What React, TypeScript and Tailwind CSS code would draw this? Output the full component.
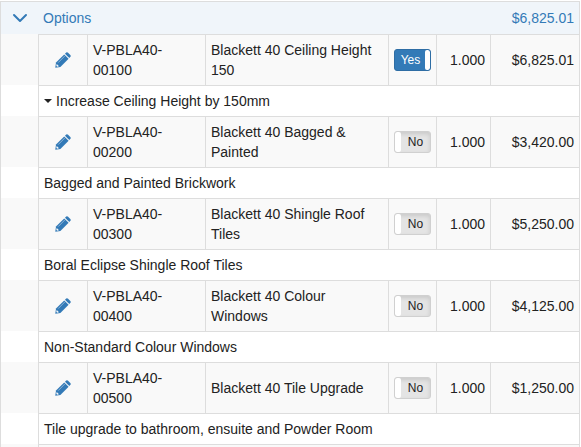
import { useState } from 'react';
import { ChevronDown } from 'lucide-react';

interface OptionItem {
    code: string;
    name: string;
    note: string;
    expandable?: boolean;
    selected: boolean;
    quantity: string;
    price: string;
}

const initialOptions: OptionItem[] = [
    { code: 'V-PBLA40-00100', name: 'Blackett 40 Ceiling Height 150', note: 'Increase Ceiling Height by 150mm', expandable: true, selected: true, quantity: '1.000', price: '$6,825.01' },
    { code: 'V-PBLA40-00200', name: 'Blackett 40 Bagged & Painted', note: 'Bagged and Painted Brickwork', selected: false, quantity: '1.000', price: '$3,420.00' },
    { code: 'V-PBLA40-00300', name: 'Blackett 40 Shingle Roof Tiles', note: 'Boral Eclipse Shingle Roof Tiles', selected: false, quantity: '1.000', price: '$5,250.00' },
    { code: 'V-PBLA40-00400', name: 'Blackett 40 Colour Windows', note: 'Non-Standard Colour Windows', selected: false, quantity: '1.000', price: '$4,125.00' },
    { code: 'V-PBLA40-00500', name: 'Blackett 40 Tile Upgrade', note: 'Tile upgrade to bathroom, ensuite and Powder Room', selected: false, quantity: '1.000', price: '$1,250.00' },
];

const cell = 'border-l border-t border-[#ddd] px-[5px] py-[5px]';

function PencilIcon() {
    return (
        <svg viewBox="0 0 16 16" className="w-4 h-4" fill="#337ab7" aria-hidden="true">
            <path d="M0.3 15.7 L1 10.6 L9.2 2.4 L13.6 6.8 L5.4 15 Z" />
            <path d="M10 1.7 L11.2 0.6 Q12.1 -0.2 13.1 0.7 L15.3 2.9 Q16.2 3.9 15.4 4.8 L14.3 6 Z" />
            <path d="M3.2 10.6 L9.9 3.9" stroke="#a3c3de" strokeWidth="0.8" />
            <path d="M1.7 12 L4 14.3 L2.2 14.7 L1.3 13.8 Z" fill="#f9f9f9" />
        </svg>
    );
}

interface YesNoToggleProps {
    label: string;
    checked: boolean;
    onChange: () => void;
}

function YesNoToggle({ label, checked, onChange }: YesNoToggleProps) {
    return (
        <label
            className={`flex w-[37px] h-[22px] rounded-[3px] border overflow-hidden cursor-pointer text-xs leading-5 ${checked ? 'bg-[#337ab7] border-[#2e6da4] text-white' : 'bg-[#e4e4e4] border-[#d0d0d0] text-[#222] flex-row-reverse shadow-[inset_0_2px_4px_rgba(0,0,0,0.12)]'}`}
        >
            <input type="checkbox" className="sr-only" aria-label={label} checked={checked} onChange={onChange} />
            <span className={`flex-1 text-center ${checked ? 'pl-px' : ''}`}>{checked ? 'Yes' : 'No'}</span>
            <span className={`rounded-[2px] bg-white ${checked ? 'w-[5px]' : 'w-[6px]'}`} />
        </label>
    );
}

export default function App() {
    const [options, setOptions] = useState(initialOptions);
    const [isOpen, setIsOpen] = useState(true);

    const toggleOption = (code: string) => {
        setOptions(prev => prev.map(o => (o.code === code ? { ...o, selected: !o.selected } : o)));
    };

    return (
        <div className="bg-white pt-px pr-px font-['Liberation_Sans',Arial,sans-serif] text-sm text-[#222]">
            <table className="w-full table-fixed border-separate border-spacing-0 border-r border-[#ddd]">
                <colgroup>
                    <col className="w-[38px]" />
                    <col className="w-[49px]" />
                    <col className="w-[118px]" />
                    <col />
                    <col className="w-[48px]" />
                    <col className="w-[54px]" />
                    <col className="w-[89px]" />
                </colgroup>
                <thead>
                    <tr className="bg-[#f0f5fa] text-[#337ab7]">
                        <th className="border-l border-t border-[#ddd] p-0 font-normal">
                            <button
                                type="button"
                                aria-label="Toggle options"
                                aria-expanded={isOpen}
                                onClick={() => setIsOpen(!isOpen)}
                                className="flex w-full justify-center cursor-pointer"
                            >
                                <ChevronDown className="w-6 h-6" strokeWidth={2} />
                            </button>
                        </th>
                        <th colSpan={5} className="border-t border-[#ddd] px-[5px] py-1.5 text-left font-normal">Options</th>
                        <th className="border-t border-[#ddd] px-[5px] py-1.5 text-right font-normal">$6,825.01</th>
                    </tr>
                </thead>
                {isOpen && options.map(option => (
                    <tbody key={option.code}>
                        <tr className="bg-[#f9f9f9]">
                            <td className="border-l border-[#ddd]" />
                            <td className={cell}>
                                <button type="button" aria-label={`Edit ${option.code}`} className="flex w-full justify-center cursor-pointer">
                                    <PencilIcon />
                                </button>
                            </td>
                            <td className={cell}>{option.code}</td>
                            <td className={cell}>{option.name}</td>
                            <td className={cell}>
                                <YesNoToggle label={option.name} checked={option.selected} onChange={() => toggleOption(option.code)} />
                            </td>
                            <td className={`${cell} text-right`}>{option.quantity}</td>
                            <td className={`${cell} text-right`}>{option.price}</td>
                        </tr>
                        <tr>
                            <td className="border-l border-[#ddd]" />
                            <td colSpan={6} className={cell}>
                                <div className="flex items-center gap-1">
                                    {option.expandable && (
                                        <svg viewBox="0 0 8 4" className="w-2 h-1" fill="#222" aria-hidden="true">
                                            <path d="M0 0h8L4 4z" />
                                        </svg>
                                    )}
                                    {option.note}
                                </div>
                            </td>
                        </tr>
                    </tbody>
                ))}
                <tfoot>
                    <tr className="h-[3px] bg-[#f9f9f9]">
                        <td className="border-l border-[#ddd] p-0" />
                        <td colSpan={6} className="border-l border-t border-[#ddd] p-0" />
                    </tr>
                </tfoot>
            </table>
        </div>
    );
}
